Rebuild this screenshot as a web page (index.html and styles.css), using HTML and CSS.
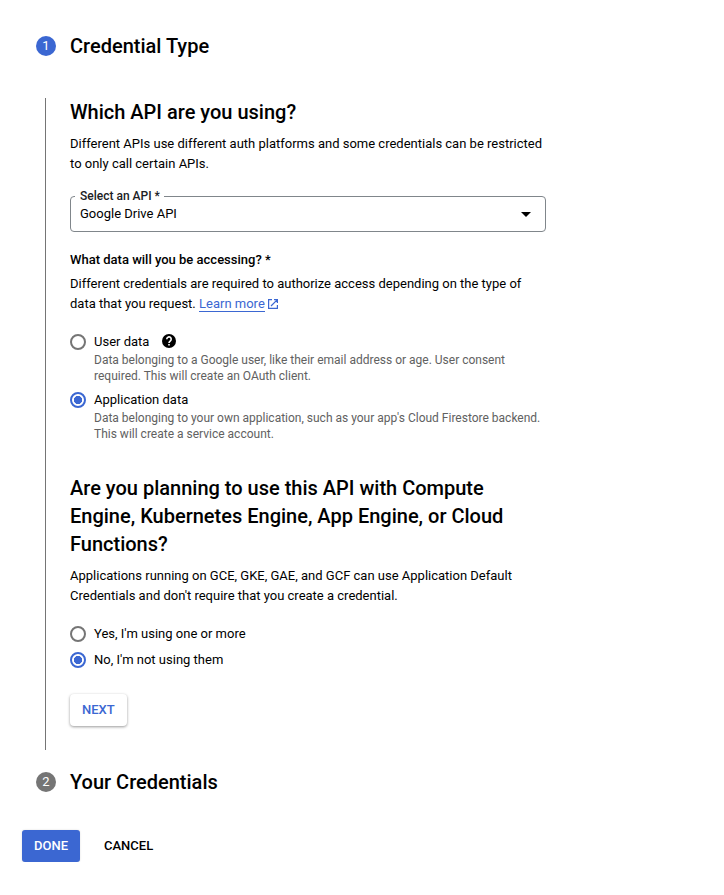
FILE: index.html
```html
<!DOCTYPE html>
<html lang="en">
<head>
<meta charset="utf-8">
<title>Create credentials</title>
<link rel="stylesheet" href="styles.css">
</head>
<body>
<main class="stepper">
  <header class="step-header">
    <span class="badge active">1</span>
    <h2>Credential Type</h2>
  </header>
  <section class="step-body">
    <h2>Which API are you using?</h2>
    <p class="lead">Different APIs use different auth platforms and some credentials can be restricted<br>to only call certain APIs.</p>
    <div class="select">
      <span class="select-label">Select an API *</span>
      <span class="select-value">Google Drive API</span>
      <svg class="caret" width="10" height="5" viewBox="0 0 10 5"><path d="M0 0h10L5 5z"/></svg>
    </div>
    <h3>What data will you be accessing? *</h3>
    <p class="data-note">Different credentials are required to authorize access depending on the type of<br>data that you request. <a href="#">Learn more</a><svg class="external" width="10" height="10" viewBox="0 0 10 10"><path d="M4 .6H.6v8.8h8.8V6M6 .6h3.4V4M9.4.6 3 7" fill="none" stroke="#3b67d2" stroke-width="1.2"/></svg></p>
    <div class="option">
      <span class="radio"></span>
      <div class="option-text">
        <div class="option-title">User data <svg class="help" width="14" height="14" viewBox="0 0 14 14"><circle cx="7" cy="7" r="7"/><path d="M4.8 5.2a2.2 2.2 0 1 1 3.6 1.6C7.4 7.6 7 7.8 7 8.9" fill="none" stroke="#fff" stroke-width="1.6"/><path d="M6.2 9.9h1.6v1.5H6.2z" fill="#fff"/></svg></div>
        <p>Data belonging to a Google user, like their email address or age. User consent<br>required. This will create an OAuth client.</p>
      </div>
    </div>
    <div class="option">
      <span class="radio checked"></span>
      <div class="option-text">
        <div class="option-title">Application data</div>
        <p>Data belonging to your own application, such as your app's Cloud Firestore backend.<br>This will create a service account.</p>
      </div>
    </div>
    <h2 class="planning">Are you planning to use this API with Compute<br>Engine, Kubernetes Engine, App Engine, or Cloud<br>Functions?</h2>
    <p class="lead">Applications running on GCE, GKE, GAE, and GCF can use Application Default<br>Credentials and don't require that you create a credential.</p>
    <div class="choices">
      <div class="option"><span class="radio"></span><div class="option-title">Yes, I'm using one or more</div></div>
      <div class="option"><span class="radio checked"></span><div class="option-title">No, I'm not using them</div></div>
    </div>
    <button class="next">NEXT</button>
  </section>
  <header class="step-header second">
    <span class="badge">2</span>
    <h2>Your Credentials</h2>
  </header>
</main>
<footer class="actions">
  <button class="done">DONE</button>
  <button class="cancel">CANCEL</button>
</footer>
</body>
</html>
```

FILE: styles.css
```css
* { box-sizing: border-box; }
body { margin: 0; background: #fff; color: #000; font: 13px/20px Roboto, sans-serif; padding: 32px 22px 0; }
h2, h3, p { margin: 0; }
h2 { font-size: 20px; line-height: 28px; font-weight: 500; }
.stepper { padding-left: 14px; }
.step-header { display: flex; align-items: center; gap: 14px; height: 28px; }
.badge { width: 20px; height: 20px; border-radius: 50%; background: #757575; color: #fff; text-align: center; }
.badge.active { background: #3b67d2; }
.step-body { margin: 38px 0 0 9px; height: 652px; border-left: 1px solid #757575; padding-left: 24px; }
.lead { margin-top: 8px; }
.select { position: relative; display: flex; align-items: center; justify-content: space-between; width: 476px; height: 36px; margin-top: 22px; padding: 0 14px 0 9px; border: 1px solid #80868b; border-radius: 4px; }
.select-label { position: absolute; top: -9px; left: 4px; padding: 0 4px 0 5px; background: #fff; font-size: 12px; line-height: 16px; font-weight: 500; color: #202124; }
h3 { margin-top: 18px; font-size: 13px; line-height: 20px; font-weight: 500; }
.data-note { margin-top: 4px; margin-bottom: 18px; }
.data-note a { color: #3b67d2; text-decoration: none; border-bottom: 1px solid #3b67d2; }
.external { margin-left: 3px; vertical-align: -1px; }
.option { display: flex; align-items: flex-start; gap: 8px; }
.option-title { display: flex; align-items: center; gap: 13px; line-height: 20px; }
.help { margin-top: -2px; }
.option p { color: #616161; font-size: 12px; line-height: 16px; }
.option + .option { margin-top: 6px; }
.radio { flex: none; width: 16px; height: 16px; margin-top: 2px; border: 2px solid #757575; border-radius: 50%; }
.radio.checked { border-color: #3b67d2; background: radial-gradient(circle, #3b67d2 0 3.8px, transparent 4.4px); }
.planning { margin-top: 32px; }
.choices { margin-top: 18px; }
button { border: 0; border-radius: 3px; height: 32px; padding: 0 12px; font: 500 13px/20px Roboto, sans-serif; background: #fff; color: #000; }
.next { margin-top: 24px; color: #3b67d2; border-radius: 4px; box-shadow: 0 1px 3px rgba(0,0,0,.4); }
.second { margin-top: 18px; }
.actions { display: flex; gap: 12px; margin-top: 34px; }
.done { background: #3b67d2; color: #fff; box-shadow: 0 0 2px rgba(0,0,0,.15); }
```
